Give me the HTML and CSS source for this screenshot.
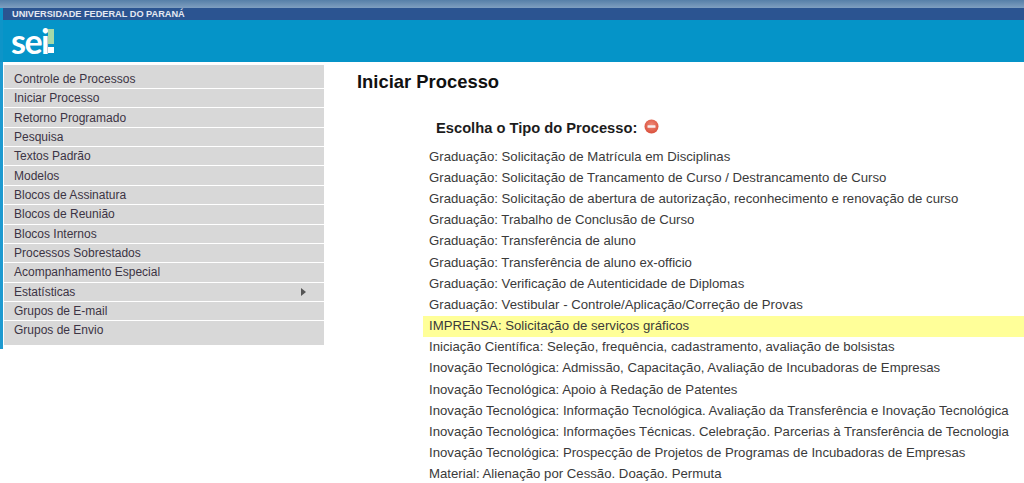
FILE: index.html
```html
<!DOCTYPE html>
<html lang="pt-BR">
<head>
<meta charset="utf-8">
<title>Iniciar Processo</title>
<link rel="stylesheet" href="styles.css">
</head>
<body>
<header class="header">
  <div class="top-band"></div>
  <div class="org-bar"><span class="org-name">UNIVERSIDADE FEDERAL DO PARANÁ</span></div>
  <div class="brand-bar">
    <span class="logo">sei</span>
    <svg class="logo-mark" width="6" height="24" viewBox="0 0 6 24"><rect x="0" y="0" width="6" height="15" fill="#a5d9a8"/><rect x="0" y="18" width="6" height="6" fill="#fff"/></svg>
  </div>
</header>
<div class="page">
  <nav class="menu">
    <a class="menu-item first">Controle de Processos</a>
    <a class="menu-item">Iniciar Processo</a>
    <a class="menu-item">Retorno Programado</a>
    <a class="menu-item">Pesquisa</a>
    <a class="menu-item">Textos Padrão</a>
    <a class="menu-item">Modelos</a>
    <a class="menu-item">Blocos de Assinatura</a>
    <a class="menu-item">Blocos de Reunião</a>
    <a class="menu-item">Blocos Internos</a>
    <a class="menu-item">Processos Sobrestados</a>
    <a class="menu-item">Acompanhamento Especial</a>
    <a class="menu-item has-sub">Estatísticas<span class="arrow"></span></a>
    <a class="menu-item">Grupos de E-mail</a>
    <a class="menu-item last">Grupos de Envio</a>
  </nav>
  <main class="content">
    <h1 class="title">Iniciar Processo</h1>
    <div class="chooser">
      <h2 class="subtitle">Escolha o Tipo do Processo:
        <svg class="minus" width="15" height="15" viewBox="0 0 15 15"><defs><radialGradient id="g" cx="50%" cy="40%" r="60%"><stop offset="0" stop-color="#f08a78"/><stop offset="1" stop-color="#d9503c"/></radialGradient></defs><circle cx="7.5" cy="7.5" r="7" fill="url(#g)"/><rect x="3.5" y="6.2" width="8" height="2.6" rx="0.6" fill="#f8eeee"/></svg>
      </h2>
      <ul class="types">
        <li>Graduação: Solicitação de Matrícula em Disciplinas</li>
        <li>Graduação: Solicitação de Trancamento de Curso / Destrancamento de Curso</li>
        <li>Graduação: Solicitação de abertura de autorização, reconhecimento e renovação de curso</li>
        <li>Graduação: Trabalho de Conclusão de Curso</li>
        <li>Graduação: Transferência de aluno</li>
        <li>Graduação: Transferência de aluno ex-officio</li>
        <li>Graduação: Verificação de Autenticidade de Diplomas</li>
        <li>Graduação: Vestibular - Controle/Aplicação/Correção de Provas</li>
        <li class="hit">IMPRENSA: Solicitação de serviços gráficos</li>
        <li>Iniciação Científica: Seleção, frequência, cadastramento, avaliação de bolsistas</li>
        <li>Inovação Tecnológica: Admissão, Capacitação, Avaliação de Incubadoras de Empresas</li>
        <li>Inovação Tecnológica: Apoio à Redação de Patentes</li>
        <li>Inovação Tecnológica: Informação Tecnológica. Avaliação da Transferência e Inovação Tecnológica</li>
        <li>Inovação Tecnológica: Informações Técnicas. Celebração. Parcerias à Transferência de Tecnologia</li>
        <li>Inovação Tecnológica: Prospecção de Projetos de Programas de Incubadoras de Empresas</li>
        <li>Material: Alienação por Cessão. Doação. Permuta</li>
      </ul>
    </div>
  </main>
</div>
</body>
</html>
```
FILE: styles.css
```css
* { box-sizing: border-box; }
html, body { margin: 0; height: 483px; overflow: hidden; background: #fff; }
body { font-family: "Liberation Sans", Arial, sans-serif; color: #333; }
.header { height: 62px; background: #0e94c8; }
.top-band { height: 8px; background: linear-gradient(#567fa8, #7f9fc0); }
.org-bar { height: 12px; margin-left: 3px; padding-left: 9px; background: #2b5491; }
.org-name { display: block; font-size: 9.2px; line-height: 12px; font-weight: 700; color: #e4e9f1; }
.brand-bar { height: 42px; background: #0594c8; margin-left: 3px; padding: 2px 0 0 8px; display: flex; align-items: flex-start; }
.logo { font-family: Lato, sans-serif; font-size: 34px; line-height: 38px; font-weight: 700; color: #fff; letter-spacing: -1.5px; }
.logo-mark { margin: 7px 0 0 0; }
.page { display: flex; align-items: flex-start; height: 421px; }
.menu { width: 324px; height: 287px; padding: 3px 0 4px 1px; border-left: 3px solid #1e9ad0; display: flex; flex-direction: column; gap: 1px; }
.menu-item { display: flex; flex: none; align-items: center; justify-content: space-between; height: 18.36px; padding: 0 18px 0 10px; background: #d8d8d8; font-size: 12px; color: #3c3444; }
.menu-item.first { height: 23px; padding-top: 4.7px; }
.menu-item.last { flex: 1; align-items: flex-start; padding-top: 2px; }
.arrow { width: 0; height: 0; border-left: 5px solid #555; border-top: 4px solid transparent; border-bottom: 4px solid transparent; }
.content { flex: 1; min-width: 0; padding: 9px 0 0 33px; }
.title { margin: 0; font-size: 18.4px; line-height: 22px; font-weight: 700; color: #111; }
.chooser { margin: 26px 0 0 66px; }
.subtitle { margin: 0 0 0 13px; font-size: 14.7px; line-height: 18px; font-weight: 700; color: #1c1c1c; display: flex; align-items: center; gap: 7px; }
.minus { margin-top: -3px; }
.types { list-style: none; margin: 9.6px 0 0; padding: 0; }
.types li { height: 21.2px; line-height: 19px; padding-left: 6px; font-size: 13.2px; color: #3a3a3a; white-space: nowrap; }
.types li.hit { background: #ffff99; }
```
